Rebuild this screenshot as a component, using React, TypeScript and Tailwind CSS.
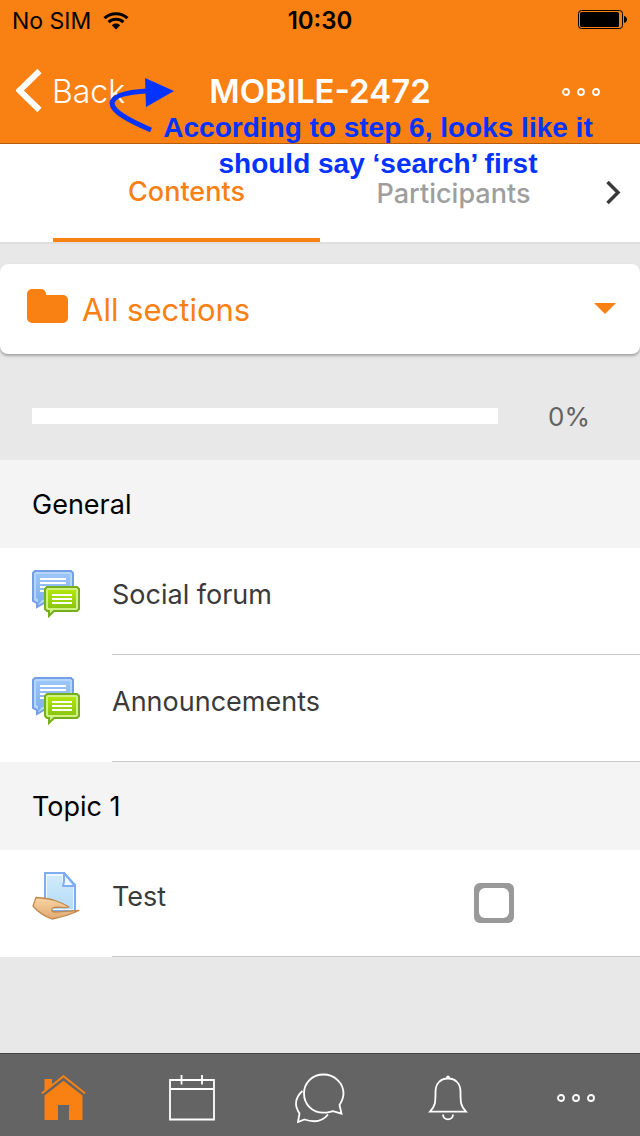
import React, { useState } from 'react';

interface Activity {
  id: number;
  name: string;
  type: 'forum' | 'assign';
  completable?: boolean;
}

interface Section {
  id: number;
  name: string;
  activities: Activity[];
}

const sections: Section[] = [
  {
    id: 0,
    name: 'General',
    activities: [
      { id: 1, name: 'Social forum', type: 'forum' },
      { id: 2, name: 'Announcements', type: 'forum' },
    ],
  },
  {
    id: 1,
    name: 'Topic 1',
    activities: [{ id: 3, name: 'Test', type: 'assign', completable: true }],
  },
];

function WifiIcon() {
  return (
    <svg width="26" height="18" viewBox="0 0 26 18" fill="none" stroke="#000" strokeWidth="3">
      <path d="M1.5 6.2C8 .2 18 .2 24.5 6.2" />
      <path d="M5.6 10.2c4.2-3.8 10.6-3.8 14.8 0" />
      <path d="M13 17.5l-4.200-4.300c2.400-2.200 6-2.200 8.400 0z" fill="#000" stroke="none" />
    </svg>
  );
}

function BatteryIcon() {
  return (
    <svg width="50" height="20" viewBox="0 0 50 20">
      <rect x=".5" y=".5" width="44" height="18" rx="3" fill="none" stroke="#000" />
      <rect x="2" y="2" width="39" height="15" rx="1.5" />
      <path d="M46 6c4 1 4 6 0 7z" />
    </svg>
  );
}

function MoreIcon() {
  return (
    <svg width="38" height="10" viewBox="0 0 38 10" fill="none" stroke="#fff" strokeWidth="1.8">
      <circle cx="4" cy="5" r="3" />
      <circle cx="19" cy="5" r="3" />
      <circle cx="34" cy="5" r="3" />
    </svg>
  );
}

function ForumIcon() {
  return (
    <svg width="48" height="48" viewBox="0 0 48 48">
      <defs>
        <linearGradient id="forumBlue" x1="0" y1="0" x2="0" y2="1">
          <stop offset="0" stopColor="#9cc6f8" />
          <stop offset="1" stopColor="#7badf0" />
        </linearGradient>
        <linearGradient id="forumGreen" x1="0" y1="0" x2="0" y2="1">
          <stop offset="0" stopColor="#b2e60c" />
          <stop offset="1" stopColor="#8cc510" />
        </linearGradient>
      </defs>
      <path d="M3 1h36l2 2v28l-2 2H12l-7 4v-4l-4-2V3z" fill="#b4d6fa" stroke="#749fe6" strokeWidth="2" />
      <path d="M4 4h34v26H10l-4 5v-6l-2-1z" fill="url(#forumBlue)" />
      <path d="M8 9h26M8 13h26M8 17h26M8 21h26" stroke="#fff" strokeWidth="2" />
      <path d="M15 17h30l2 2v20l-2 2H22l-5 5v-5h-2l-2-2V19z" fill="#d0f184" stroke="#76ae1e" strokeWidth="2" />
      <path d="M16 20h28v18H16z" fill="url(#forumGreen)" />
      <path d="M20 25h20M20 29h20M20 33h20" stroke="#fff" strokeWidth="2" />
    </svg>
  );
}

function AssignIcon() {
  return (
    <svg width="48" height="48" viewBox="0 0 48 48">
      <defs>
        <linearGradient id="assignPage" x1="0" y1="0" x2="0" y2="1">
          <stop offset="0" stopColor="#d0eafb" />
          <stop offset="1" stopColor="#b5dcf7" />
        </linearGradient>
        <linearGradient id="assignHand" x1="0" y1="0" x2="0" y2="1">
          <stop offset="0" stopColor="#f8d5a4" />
          <stop offset="1" stopColor="#e2a970" />
        </linearGradient>
      </defs>
      <path d="M13 1h19l11 12v26H13z" fill="#eef7fe" stroke="#7fadf3" strokeWidth="2" />
      <path d="M15 4h15v11h11v22H15z" fill="url(#assignPage)" />
      <path d="M32 1v8l-1 5h12z" fill="#eef7fe" stroke="#7fadf3" strokeWidth="2" strokeLinejoin="round" />
      <path
        d="M4 25.500c7 .5 13 1 19 3 6 2 10 4 14 6.500-5 1.500-10-.5-15 .5-3 1-3 4.500 1 4.500 8 0 15-1 24-1.500-8 4-17 6.500-27 8.500C13 44.500 6 40 1 34z"
        fill="url(#assignHand)"
        stroke="#c18950"
        strokeWidth="1.3"
        strokeLinejoin="round"
      />
    </svg>
  );
}

function HomeIcon() {
  return (
    <svg width="46" height="46" viewBox="0 0 46 46" fill="#f98012">
      <path d="M3.5 4H11v6l-7.500 6z" />
      <path d="M3.5 20.500L22.500 5.700l19 14.800V45H28V30H17v15H3.500z" />
      <path d="M.8 18.500L22.500 1.200l21.700 17.300" fill="none" stroke="#f98012" strokeWidth="2" />
    </svg>
  );
}

function CalendarIcon() {
  return (
    <svg width="46" height="46" viewBox="0 0 46 46" fill="none" stroke="#fff" strokeWidth="1.8">
      <path d="M1 5h44v39.500H1zM1 14h44M12.500 0v9.500M33 0v9.500" />
    </svg>
  );
}

function ChatIcon() {
  return (
    <svg width="50" height="50" viewBox="0 0 50 50" fill="none" stroke="#fff" strokeWidth="1.8">
      <path d="M28.500 1.500C39.500 1.500 48.500 10 48.500 20.500c0 5-1.500 7.500-4 11.500l2 8.700-8.500-2.500c-3 .5-5.500 1.500-9.500 1.500C17 39.700 9 31 9 20.500S17 1.500 28.500 1.500z" />
      <path d="M7.500 18C2.500 22 1 27 1 31c0 4 2 7 3.500 9.500L3 49l6.500-2.500c9 3 18 2 23.500-5" />
    </svg>
  );
}

function BellIcon() {
  return (
    <svg width="40" height="46" viewBox="0 0 40 46" fill="none" stroke="#fff" strokeWidth="1.8">
      <path d="M20 3.500C12 3.500 7.500 9 7.500 17c0 10 0 14-5.500 19.700h36c-5.500-5.700-5.500-9.700-5.500-19.700C32.500 9 28 3.500 20 3.500z" />
      <circle cx="20" cy="2.300" r="1.800" fill="#fff" stroke="none" />
      <path d="M15 39.500c0 6.500 10 6.500 10 0" />
    </svg>
  );
}

const tabs = [
  { label: 'Home', icon: <HomeIcon /> },
  { label: 'Calendar', icon: <CalendarIcon /> },
  { label: 'Messages', icon: <ChatIcon /> },
  { label: 'Notifications', icon: <BellIcon /> },
  { label: 'More', icon: <MoreIcon /> },
];

function Header() {
  return (
    <header className="bg-[#f98012] border-b border-[#b65e0d]">
      <div className="grid grid-cols-[1fr_auto_1fr] items-center h-10 px-3 text-[23px] text-black">
        <div className="flex items-center gap-3 pt-0.5">
          No SIM
          <WifiIcon />
        </div>
        <div className="pt-0.5 text-2xl font-semibold">10:30</div>
        <div className="flex justify-end">
          <BatteryIcon />
        </div>
      </div>
      <div className="grid grid-cols-[1fr_auto_1fr] items-center h-[103px] px-4 text-white">
        <button className="flex items-center gap-2.5 text-[32px] font-light">
          <svg width="26" height="46" viewBox="0 0 26 46" fill="none" stroke="#fff" strokeWidth="6">
            <path d="M23.500 2L3.500 21.500l20 19.500" />
          </svg>
          Back
        </button>
        <h1 className="text-[33px] font-semibold">MOBILE-2472</h1>
        <button aria-label="More options" className="justify-self-end pr-6">
          <MoreIcon />
        </button>
      </div>
    </header>
  );
}

function Annotation() {
  return (
    <div className="absolute inset-x-0 top-[74px] text-[#0433ff] pointer-events-none">
      <svg className="absolute left-[108px] top-0" width="70" height="60" viewBox="0 0 70 60">
        <path d="M43 56C22 47 4 38 4 29 5 21 20 18 39 17" fill="none" stroke="#0433ff" strokeWidth="5" />
        <path d="M37 4l29 13-28 16z" fill="#0433ff" />
      </svg>
      <p className="mt-9 ml-[116px] text-center text-[28px] leading-9 font-bold font-['Liberation_Sans',sans-serif]">
        According to step 6, looks like it
        <br />
        should say ‘search’ first
      </p>
    </div>
  );
}

export default function App() {
  const [section, setSection] = useState('all');
  const [done, setDone] = useState<number[]>([]);

  const toggle = (id: number) => {
    setDone(done.includes(id) ? done.filter((d) => d !== id) : [...done, id]);
  };

  const visible = sections.filter((s) => section === 'all' || String(s.id) === section);

  return (
    <div className="relative flex flex-col min-h-screen bg-[#e8e8e8] text-[#3a3a3a] font-['Inter',sans-serif]">
      <Header />
      <Annotation />

      {/* Course tabs */}
      <nav className="flex h-[100px] bg-white border-b-2 border-[#dedede] text-[27px] font-medium">
        <div className="w-[53px]" />
        <button className="flex-1 pt-0.5 text-[#f98012] border-b-4 border-[#f98012]">Contents</button>
        <button className="flex-1 pt-0.5 text-[#9e9e9e]">Participants</button>
        <button aria-label="Next tabs" className="w-[53px] flex items-center justify-center">
          <svg width="16" height="24" viewBox="0 0 16 24" fill="none" stroke="#3a3a3a" strokeWidth="3.5">
            <path d="M1.500 1L12 11.500 1.500 22" />
          </svg>
        </button>
      </nav>

      <main className="flex-1">
        {/* Section selector */}
        <label className="flex items-center h-[90px] mt-5 px-6 bg-white rounded-lg shadow-[0_2px_3px_rgba(0,0,0,0.3)] text-[#f98012]">
          <svg width="46" height="42" viewBox="0 0 46 42" fill="#f98012">
            <path d="M3 6a5 5 0 0 1 5-5h9a5 5 0 0 1 5 5v1h17a5 5 0 0 1 5 5v18a5 5 0 0 1-5 5H8a5 5 0 0 1-5-5z" />
          </svg>
          <select
            aria-label="Section"
            value={section}
            onChange={(e) => setSection(e.target.value)}
            className="flex-1 ml-3 pt-0.5 appearance-none bg-transparent text-[31px]"
          >
            <option value="all">All sections</option>
            {sections.map((s) => (
              <option key={s.id} value={s.id}>
                {s.name}
              </option>
            ))}
          </select>
          <svg width="22" height="12" viewBox="0 0 22 12" fill="#f98012">
            <path d="M0 0h22L11 11z" />
          </svg>
        </label>

        {/* Progress */}
        <div className="flex items-center h-[106px] pl-8 pt-[18px] text-[26px] text-[#626262]">
          <div className="flex-1 h-4 bg-white" />
          <span className="w-[142px] text-center">0%</span>
        </div>

        {visible.map((s) => (
          <section key={s.id}>
            <h2 className="flex items-center h-[88px] px-8 pt-0.5 bg-[#f4f4f4] text-[27px] text-black">{s.name}</h2>
            <ul className="bg-white">
              {s.activities.map((a) => (
                <li key={a.id} className="flex h-[107px] pl-8">
                  <div className="w-20 pt-[22px]">{a.type === 'forum' ? <ForumIcon /> : <AssignIcon />}</div>
                  <div className="flex-1 flex justify-between border-b border-[#c8c7cc]">
                    <a href="#" className="pt-[29px] text-[27px] leading-9">
                      {a.name}
                    </a>
                    {a.completable && (
                      <input
                        type="checkbox"
                        aria-label={`Mark ${a.name} as complete`}
                        checked={done.includes(a.id)}
                        onChange={() => toggle(a.id)}
                        className="appearance-none size-10 mt-[33px] mr-[126px] bg-[#999] rounded-md before:block before:size-[30px] before:m-[5px] before:rounded-md before:bg-white checked:before:bg-[#f98012]"
                      />
                    )}
                  </div>
                </li>
              ))}
            </ul>
          </section>
        ))}
      </main>

      <footer className="grid grid-cols-5 h-[83px] bg-[#646464] border-t border-[#444]">
        {tabs.map((t) => (
          <button key={t.label} aria-label={t.label} className="flex items-center justify-center pt-1.5">
            {t.icon}
          </button>
        ))}
      </footer>
    </div>
  );
}
